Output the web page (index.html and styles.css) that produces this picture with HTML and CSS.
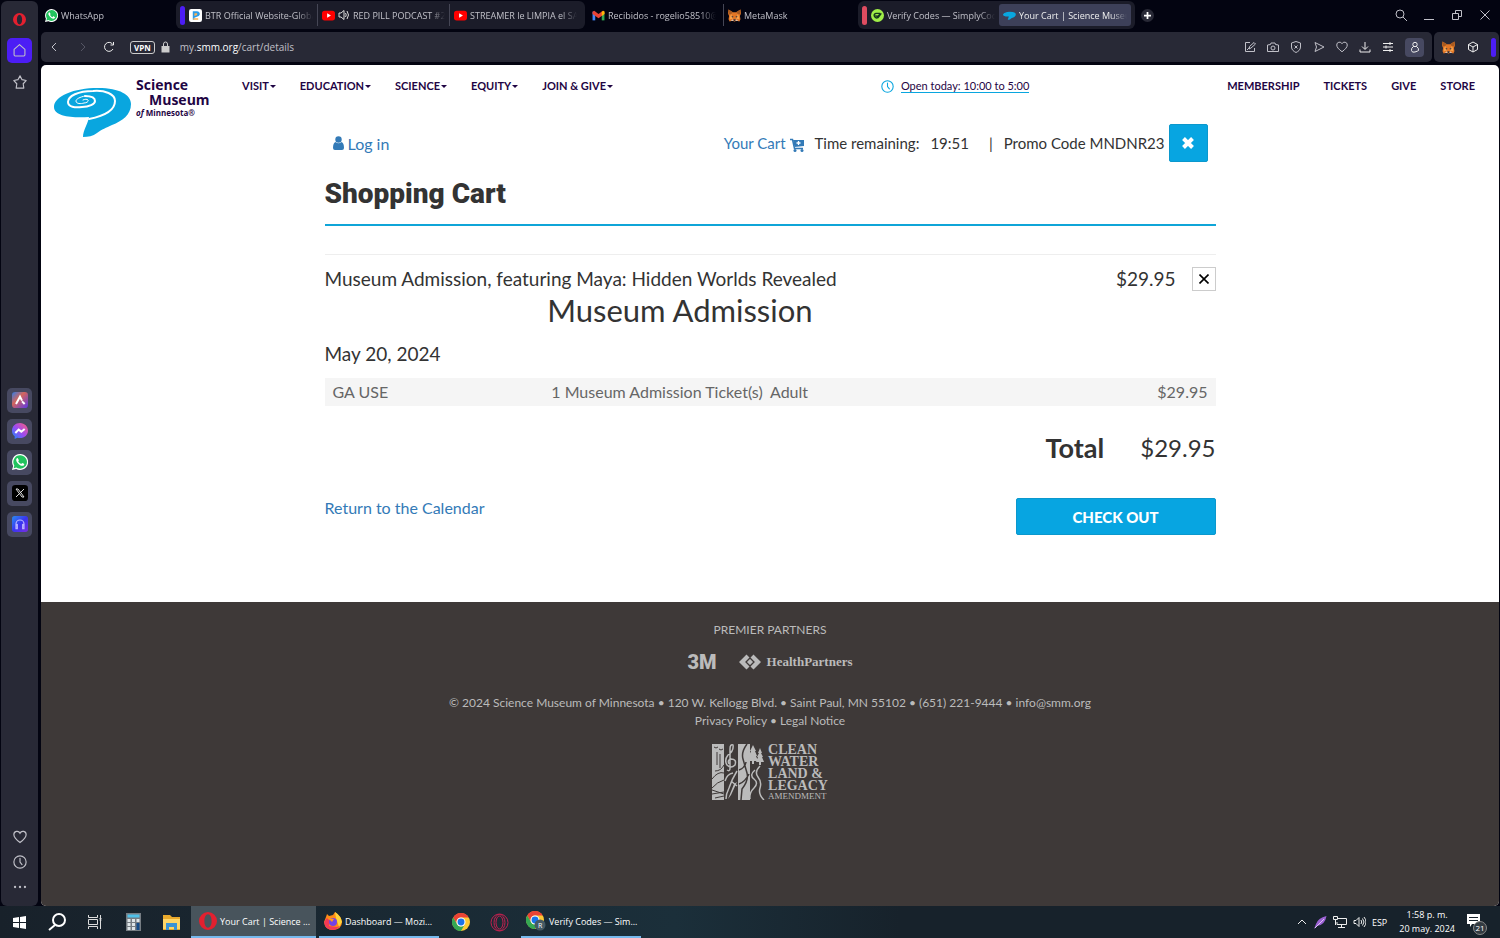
FILE: index.html
```html
<!DOCTYPE html>
<html lang="en">
<head>
    <meta charset="UTF-8">
    <meta name="viewport" content="width=device-width, initial-scale=1.0">
    <title>Your Cart | Science Museum of Minnesota</title>
    <link rel="stylesheet" href="styles.css">
</head>
<body>

<!-- shared icons -->
<svg class="sprite" aria-hidden="true">
    <symbol id="whatsapp" viewBox="0 0 24 24">
        <path fill="#fff" d="M12 0a12 12 0 0 0-10.300 18L0 24l6.200-1.600A12 12 0 1 0 12 0z"/>
        <path fill="#22c35e" d="M12 2a10 10 0 0 0-8.500 15.200l-1 4 4.100-1.100A10 10 0 1 0 12 2z"/>
        <path fill="#fff" d="M8.600 6.500c-.3-.6-.9-.6-1.300-.2C5.500 8 6.200 10.500 8 13c2.200 3 5 4.800 7.500 4.800 1.500 0 3-1.200 2.900-2.600 0-.4-2.700-1.900-3.100-1.700-.5.300-1 1.500-1.500 1.500-1.200 0-4.300-2.800-4.400-4 0-.5 1-1 1-1.600z"/>
    </symbol>
    <symbol id="youtube" viewBox="0 0 24 24">
        <rect x="0" y="3" width="24" height="18" rx="5" fill="#f00"/>
        <path d="M9.500 8v8l7-4z" fill="#fff"/>
    </symbol>
    <symbol id="fox" viewBox="0 0 24 24">
        <path fill="#e27625" d="M1 1l8 5h6l8-5 1 7-2 5 1 6-2 4-6-2-2 2h-2l-2-2-6 2-2-4 1-6-2-5z"/>
        <path fill="#a85a20" d="M1 1l8 5-3 3-5 1zM23 1l-8 5 3 3 5 1z"/>
        <path fill="#f6a24b" d="M6 9l3 9-6 1 1-6zM18 9l-3 9 6 1-1-6z"/>
        <path fill="#233447" d="M6 13l4 1-1 2zM18 13l-4 1 1 2zM10 19h4l-1 3h-2z"/>
        <path fill="#d7c1b3" d="M5 22l4-3 1 3zM19 22l-4-3-1 3z"/>
    </symbol>
    <symbol id="opera" viewBox="0 0 24 24">
        <path fill="#e3202f" fill-rule="evenodd" d="M12 0a12 12 0 1 0 0 24 12 12 0 0 0 0-24zm0 3c3 0 4.800 4 4.800 9s-1.800 9-4.800 9-4.800-4-4.800-9S9 3 12 3z"/>
    </symbol>
    <symbol id="chrome" viewBox="0 0 24 24">
        <circle cx="12" cy="12" r="12" fill="#fcc934"/>
        <path fill="#ea4335" d="M1.600 6A12 12 0 0 1 22.400 6H12a6 6 0 0 0-5.200 9z"/>
        <path fill="#34a853" d="M1.600 6A12 12 0 0 0 12 24l5.200-9A6 6 0 0 1 6.800 15z"/>
        <circle cx="12" cy="12" r="6" fill="#fff"/>
        <circle cx="12" cy="12" r="4.600" fill="#1a73e8"/>
    </symbol>
    <symbol id="heart" viewBox="0 0 24 24">
        <path fill="none" stroke="currentColor" stroke-width="2" d="M12 21.500C5 16 1.500 12.500 1.500 8A5.500 5.500 0 0 1 12 5.500 5.500 5.500 0 0 1 22.500 8c0 4.500-3.500 8-10.500 13.500z"/>
    </symbol>
    <symbol id="clock" viewBox="0 0 24 24">
        <g fill="none" stroke="currentColor" stroke-width="2" stroke-linecap="round"><circle cx="12" cy="12" r="10.500"/><path d="M12 5.500V12l3.500 4.500"/></g>
    </symbol>
    <symbol id="swirl" viewBox="0 0 78 52">
        <path fill="#09a6df" d="M0 21C0 10 20 2 44 2c22 0 33 7 33 16 0 11-9 17-19 21-6 3-10 4-15 8-4 3-9 4-14 4 0-7 5-13 6-20C20 32 0 31 0 21z"/>
    </symbol>
</svg>

<div class="browser">
    <aside class="sidebar">
        <nav class="side-top">
            <a href="#" class="side-link" aria-label="Opera"><svg width="13" height="13"><use href="#opera"/></svg></a>
            <a href="#" class="side-link side-active" aria-label="Home"><svg width="13" height="13" viewBox="0 0 24 24" fill="none" stroke="currentColor" stroke-width="2" stroke-linejoin="round"><path d="M2 10L12 1l10 9v10a2 2 0 0 1-2 2H4a2 2 0 0 1-2-2z"/></svg></a>
            <a href="#" class="side-link" aria-label="Favorites"><svg width="14" height="14" viewBox="0 0 24 24" fill="none" stroke="currentColor" stroke-width="2" stroke-linejoin="round"><path d="M12 1.500l3.500 6.500 7 1.500-5 5.500 1 7.500H5.500l1-7.500-5-5.500 7-1.500z"/></svg></a>
        </nav>
        <nav class="side-apps">
            <a href="#" class="app" aria-label="Aria"><svg width="16" height="16" viewBox="0 0 24 24"><defs><linearGradient id="g1" x2="1" y2="1"><stop stop-color="#2f7ee8"/><stop offset=".4" stop-color="#d4665c"/><stop offset="1" stop-color="#5a36e8"/></linearGradient></defs><rect width="24" height="24" rx="5" fill="url(#g1)"/><path d="M6 18l6-11 3 6M15 14l4 4" fill="none" stroke="#fff" stroke-width="3"/></svg></a>
            <a href="#" class="app" aria-label="Messenger"><svg width="16" height="16" viewBox="0 0 24 24"><defs><linearGradient id="g2" x1="0" y1="1" x2="1" y2="0"><stop stop-color="#1689ff"/><stop offset=".5" stop-color="#a04af0"/><stop offset="1" stop-color="#ff6078"/></linearGradient></defs><path fill="url(#g2)" d="M12 0C5 0 0 5 0 11.500c0 4 1.500 6.500 4 8.500v4l4-2c1 .4 2.500.600 4 .600 7 0 12-5 12-11S19 0 12 0z"/><path d="M5 15l5-5 4 3 5-4" fill="none" stroke="#fff" stroke-width="3"/></svg></a>
            <a href="#" class="app" aria-label="WhatsApp"><svg width="16" height="16"><use href="#whatsapp"/></svg></a>
            <a href="#" class="app" aria-label="X"><svg width="16" height="16" viewBox="0 0 24 24"><rect width="24" height="24" rx="5" fill="#000"/><path d="M6 6h3l9 12h-3zM18 6L6 18" fill="none" stroke="#ddd" stroke-width="1.500"/></svg></a>
            <a href="#" class="app" aria-label="Player"><svg width="16" height="16" viewBox="0 0 24 24"><defs><linearGradient id="g3" x2="1" y2="1"><stop stop-color="#2a8cf0"/><stop offset=".5" stop-color="#3a35f0"/><stop offset="1" stop-color="#7a2ee0"/></linearGradient></defs><rect width="24" height="24" rx="4" fill="url(#g3)"/><path d="M6 16v-4a6 6 0 0 1 12 0v4M8 13v6H6v-5zM16 13v6h2v-5z" fill="none" stroke="#b9b4ff" stroke-width="1.800"/></svg></a>
        </nav>
        <nav class="side-bottom">
            <a href="#" aria-label="Likes"><svg width="14" height="14"><use href="#heart"/></svg></a>
            <a href="#" aria-label="History"><svg width="14" height="14"><use href="#clock"/></svg></a>
            <a href="#" aria-label="More"><svg width="14" height="14" viewBox="0 0 24 24" fill="currentColor"><circle cx="3.500" cy="12" r="2"/><circle cx="12" cy="12" r="2"/><circle cx="20.500" cy="12" r="2"/></svg></a>
        </nav>
    </aside>

    <div class="window">
        <div class="tabstrip">
            <a href="#" class="tab"><svg width="13" height="13"><use href="#whatsapp"/></svg><span>WhatsApp</span></a>
            <div class="tab-group">
                <i class="pill"></i>
                <a href="#" class="tab"><svg width="13" height="13" viewBox="0 0 24 24"><rect width="24" height="24" rx="4" fill="#fff"/><path fill="#2d9be8" d="M7 4h8a5 5 0 0 1 3 9l-8 3v4H7z"/><path fill="#ffb050" d="M10 8h5v3l-5 2zM8 17h9v3H8z"/></svg><span>BTR Official Website-Global</span></a>
                <a href="#" class="tab divided"><svg width="13" height="13"><use href="#youtube"/></svg><svg width="12" height="12" viewBox="0 0 24 24" fill="none" stroke="#ddd" stroke-width="2"><path d="M2 8h4l6-5v18l-6-5H2zM15 8q3 4 0 8M18 4q6 8 0 16"/></svg><span>RED PILL PODCAST #265</span></a>
                <a href="#" class="tab divided"><svg width="13" height="13"><use href="#youtube"/></svg><span>STREAMER le LIMPIA el SALDO</span></a>
            </div>
            <a href="#" class="tab"><svg width="13" height="13" viewBox="0 0 24 24"><path fill="#4285f4" d="M1 5h5v16H1z"/><path fill="#34a853" d="M18 8h5v13h-5z"/><path fill="#ea4335" d="M1 5l3-2 8 6 8-6 3 2v4l-11 8L1 9z"/><path fill="#fbbc04" d="M18 5l4-2 1 2v4l-5 4z"/></svg><span>Recibidos - rogelio58510@gmail</span></a>
            <a href="#" class="tab divided"><svg width="13" height="13"><use href="#fox"/></svg><span>MetaMask</span></a>
            <div class="tab-group">
                <i class="pill pill-red"></i>
                <a href="#" class="tab"><svg width="13" height="13" viewBox="0 0 24 24"><circle cx="12" cy="12" r="12" fill="#a0ee48"/><path fill="none" stroke="#15351c" stroke-width="2.500" d="M17 8H9q-4 1-3 5 2 5 7 3l6-8M8 12l4 2 5-5"/></svg><span>Verify Codes — SimplyCodes</span></a>
                <a href="#" class="tab tab-active"><svg width="13" height="13" viewBox="0 0 78 78"><g transform="translate(0 14)"><use href="#swirl" width="78" height="52"/></g></svg><span>Your Cart | Science Museum</span></a>
            </div>
            <button class="new-tab" aria-label="New tab"><svg width="7" height="7" viewBox="0 0 8 8" stroke="#fff" stroke-width="2"><path d="M4 0v8M0 4h8"/></svg></button>
            <div class="window-buttons">
                <button aria-label="Search tabs"><svg width="12" height="12" viewBox="0 0 12 12"><circle cx="5" cy="5" r="4"/><path d="M8 8l4 4"/></svg></button>
                <button aria-label="Minimize"><svg width="12" height="12" viewBox="0 0 12 12"><path d="M1 10.500h10"/></svg></button>
                <button aria-label="Restore"><svg width="12" height="12" viewBox="0 0 12 12"><path d="M1.500 4.500h6v6h-6zM4.500 4V1.500h6v6H8"/></svg></button>
                <button aria-label="Close"><svg width="12" height="12" viewBox="0 0 12 12"><path d="M1.500 1.500l9 9M10.500 1.500l-9 9"/></svg></button>
            </div>
        </div>

        <div class="toolbar">
            <div class="address">
                <button aria-label="Back"><svg width="12" height="12" viewBox="0 0 12 12"><path d="M7 2L3 6l4 4"/></svg></button>
                <button aria-label="Forward" class="dim"><svg width="12" height="12" viewBox="0 0 12 12"><path d="M5 2l4 4-4 4"/></svg></button>
                <button aria-label="Reload"><svg width="12" height="12" viewBox="0 0 12 12" class="bright"><path d="M10 8A4.500 4.500 0 1 1 9.500 3M10.500 1v3h-3"/></svg></button>
                <span class="vpn">VPN</span>
                <svg class="lock" width="9" height="12" viewBox="0 0 9 12"><path fill="#ccc" d="M0.500 5h8v6.500h-8z"/><path d="M2.500 5V3a2 2 0 0 1 4 0v2" fill="none" stroke="#ccc"/></svg>
                <span class="url">my.<b>smm.org</b>/cart/details</span>
                <div class="tools">
                    <button aria-label="Edit"><svg width="12" height="12" viewBox="0 0 12 12"><path d="M6 1.500H1.500v9h9V7M5 8l.5-2.500 4.500-4 1.500 1.500-4.500 4zM3 9l3-3"/></svg></button>
                    <button aria-label="Snapshot"><svg width="12" height="12" viewBox="0 0 12 12"><path d="M.5 4l3-.5L4 2h4l.5 1.500 3 .5v6.500H.5z"/><circle cx="6" cy="7" r="2"/></svg></button>
                    <button aria-label="Shield"><svg width="12" height="12" viewBox="0 0 12 12"><path d="M6 .5l4.500 1.500v4C10.500 9 8 10.500 6 11.500 4 10.500 1.500 9 1.500 6V2zM4.500 4.500l3 3M7.500 4.500l-3 3"/></svg></button>
                    <button aria-label="Flow"><svg width="12" height="12" viewBox="0 0 12 12"><path d="M2 1.500L11 6l-9 4.500L3.500 6z"/></svg></button>
                    <button aria-label="Like"><svg width="12" height="12"><use href="#heart"/></svg></button>
                    <button aria-label="Downloads"><svg width="12" height="12" viewBox="0 0 12 12" class="bright"><path d="M6 1v7M3 5.500l3 3 3-3M1 8.500v2.500h10V8.500"/></svg></button>
                    <button aria-label="Setup"><svg width="12" height="12" viewBox="0 0 12 12" class="bright"><path d="M1 2.500h10M1 6h10M1 9.500h10M8 1v3M4 4.500v3M8 8v3"/></svg></button>
                    <button aria-label="Profile" class="profile"><svg width="12" height="12" viewBox="0 0 12 12" class="bright"><circle cx="6" cy="3.500" r="2.200"/><path d="M4.500 5.500Q2 7 2.500 9.500T6 11t3.500-1.500Q10 7 7.500 5.500z"/></svg></button>
                </div>
            </div>
            <div class="extensions">
                <button aria-label="MetaMask"><svg class="fox" width="13" height="13"><use href="#fox"/></svg></button>
                <button aria-label="Extensions"><svg width="12" height="12" viewBox="0 0 12 12" class="bright"><path d="M6 1l4.500 2.500v5L6 11 1.500 8.500v-5zM1.500 3.500L6 6l4.500-2.500M6 6v5"/></svg></button>
                <i class="pill"></i>
            </div>
        </div>

        <div class="page">
            <header class="site-header">
                <a href="#" class="logo">
                    <svg width="78" height="52" viewBox="0 0 78 52">
                        <use href="#swirl" width="78" height="52"/>
                        <g fill="none" stroke="#fff" stroke-linecap="round">
                            <path stroke-width="2" d="M35 33C50 30 61 24 61 15 61 8 51 4 39 5 24 5 14 10 14 16c0 5 7 6 14 5 7 0 13-3 13-6 0-4-5-5-10-5"/>
                            <path d="M31 10c-5 1-9 3-9 5 0 3 5 3 8 2 3 0 5-2 4-3-1-1-3-1-5 0"/>
                        </g>
                    </svg>
                    <span class="logo-text"><b>Science</b><b class="indent">Museum</b><small><i>of</i> Minnesota®</small></span>
                </a>
                <nav class="main-nav">
                    <a href="#">VISIT<i class="caret"></i></a>
                    <a href="#">EDUCATION<i class="caret"></i></a>
                    <a href="#">SCIENCE<i class="caret"></i></a>
                    <a href="#">EQUITY<i class="caret"></i></a>
                    <a href="#">JOIN &amp; GIVE<i class="caret"></i></a>
                </nav>
                <div class="hours"><svg width="13" height="13"><use href="#clock"/></svg><a href="#">Open today: 10:00 to 5:00</a></div>
                <nav class="main-nav">
                    <a href="#">MEMBERSHIP</a>
                    <a href="#">TICKETS</a>
                    <a href="#">GIVE</a>
                    <a href="#">STORE</a>
                </nav>
            </header>

            <main class="container">
                <div class="cart-bar">
                    <a href="#" class="login"><svg width="11" height="14" viewBox="0 0 11 14" fill="currentColor"><circle cx="5.500" cy="3.500" r="3.200"/><path d="M2.500 6q3 2.500 6 0Q11 7 11 12q0 2-2 2H2q-2 0-2-2 0-5 2.500-6z"/></svg>Log in</a>
                    <div class="cart-status">
                        <a href="#">Your Cart <svg width="14" height="14" viewBox="0 0 14 14"><path fill="currentColor" d="M3 2h11v6L4.500 9z"/><path d="M0 1.500h2.500l2 9H13" fill="none" stroke="currentColor" stroke-width="1.500"/><path d="M8.500 3v4M6.500 5h4" stroke="#fff" stroke-width="1.300"/><circle cx="5" cy="12.500" r="1.500" fill="currentColor"/><circle cx="12" cy="12.500" r="1.500" fill="currentColor"/></svg></a>
                        <span>Time remaining:</span>
                        <span class="timer">19:51</span>
                        <span class="bar">|</span>
                        <span class="promo">Promo Code MNDNR23</span>
                        <button class="btn remove-promo" aria-label="Remove promo code"><svg width="12" height="12" viewBox="0 0 12 12" stroke="#fff" stroke-width="4"><path d="M1.500 1.500l9 9M10.500 1.500l-9 9"/></svg></button>
                    </div>
                </div>

                <h1>Shopping Cart</h1>

                <section class="item">
                    <div class="item-head">
                        <span>Museum Admission, featuring Maya: Hidden Worlds Revealed</span>
                        <span class="price">$29.95</span>
                        <button class="remove" aria-label="Remove item"><svg width="10" height="10" viewBox="0 0 10 10" stroke="#000" stroke-width="1.600"><path d="M.5.500l9 9M9.500.500l-9 9"/></svg></button>
                    </div>
                    <h2>Museum Admission</h2>
                    <p class="date">May 20, 2024</p>
                    <table class="tickets">
                        <tr><td>GA USE</td><td>1 Museum Admission Ticket(s)</td><td>Adult</td><td class="amount">$29.95</td></tr>
                    </table>
                </section>

                <div class="total"><b>Total</b><span>$29.95</span></div>

                <div class="actions">
                    <a href="#">Return to the Calendar</a>
                    <button class="btn checkout">CHECK OUT</button>
                </div>
            </main>

            <footer class="site-footer">
                <p>PREMIER PARTNERS</p>
                <div class="partners">
                    <span class="mmm">3M</span>
                    <span class="health"><svg width="22" height="16" viewBox="0 0 22 16"><path fill="#bbb" d="M0 8l7.500-7.500L11 4l3.500-3.500L22 8l-7.500 7.500L11 12l-3.500 3.500z"/><path fill="none" stroke="#3e3938" stroke-width="1.300" d="M7 8l4-4 4 4-4 4z"/></svg>HealthPartners</span>
                </div>
                <p>© 2024 Science Museum of Minnesota • 120 W. Kellogg Blvd. • Saint Paul, MN 55102 • (651) 221-9444 • <a href="#">info@smm.org</a><br><a href="#">Privacy Policy</a> • <a href="#">Legal Notice</a></p>
                <div class="legacy">
                    <svg width="53" height="56" viewBox="0 0 53 56">
                        <path fill="#bbb" d="M0 0h12v56H0zM26 0h12v56H26z"/>
                        <g fill="none" stroke="#3e3938">
                            <path d="M2 3l2 1 2-1M7 5l2 1 2-1M5 8v13M8 10v14M3 27q6 0 9-6M0 35q6-8 12-6M0 44q5-6 12-8M0 46l12 4M0 50l12-2M3 54l9-2"/>
                            <path stroke-width="1.500" d="M35 0q-6 8-4 15t4 14-5 16l-1 11M27 26q6-2 7-8M27 40q6-2 10-10"/>
                        </g>
                        <g fill="none" stroke="#bbb" stroke-width="1.500">
                            <path d="M18 24V5q0-5 3-4 1 6-5 10-4 5-1 10 4 4 8 0 2-6-4-6-4 1-2 5M18 24q0 4-3 2M25 27q-5 8-8 17-3 6-3 11M21 29q-6 1-8 8M19 37l6 5M43 26q-6 5-1 9t0 9-4 11M48 22q-6 6-2 11t2 11 4 12"/>
                        </g>
                        <path fill="#bbb" d="M41 1l3 6h-1l2 5h-1l2 5h-4v3h-2v-3h-4l2-5h-1l2-5h-1zM48 4l2 5h-1l2 4h-1l2 5h-3v3h-2v-3h-3l2-5h-1l2-4h-1zM22 40l3-2-6 13-3 4z"/>
                    </svg>
                    <div class="legacy-text"><b>CLEAN</b><b>WATER</b><b>LAND &amp;</b><b>LEGACY</b><small>AMENDMENT</small></div>
                </div>
            </footer>
        </div>
    </div>
</div>

<div class="taskbar">
    <button aria-label="Start"><svg width="13" height="13" viewBox="0 0 13 13" fill="#fff"><path d="M0 2l6-1v5H0zM7 1l6-1v6H7zM0 7h6v5l-6-1zM7 7h6v6l-6-1z"/></svg></button>
    <button aria-label="Search"><svg width="18" height="18" viewBox="0 0 18 18" fill="none" stroke="#fff" stroke-width="2"><circle cx="11" cy="7" r="6"/><path d="M7 12l-6 5"/></svg></button>
    <button aria-label="Task view"><svg width="14" height="14" viewBox="0 0 14 14" fill="none" stroke="#ddd"><path d="M.5 0v2.500h9V0M.5 4.500h9v5h-9zM.5 14v-2.500h9V14M12.500 0v14M11.500 3.500h2M11.500 5h2"/></svg></button>
    <button aria-label="Calculator"><svg width="15" height="18" viewBox="0 0 15 18"><path fill="#767d83" d="M0 0h15v18H0z"/><path fill="#4fc1e9" d="M1.500 1.500h12v3h-12z"/><path fill="#dfe5e8" d="M1.500 6h3v3h-3zM6 6h3v3H6zM10.500 6h3v3h-3zM1.500 10h3v3h-3zM6 10h3v3H6zM1.500 14h3v3h-3zM6 14h3v3H6z"/><path fill="#164b86" d="M10.500 10h3v7h-3z"/></svg></button>
    <button aria-label="File Explorer"><svg width="17" height="15" viewBox="0 0 17 15"><path fill="#e8a92c" d="M0 0h7l2 2h8v13H0z"/><path fill="#ffd667" d="M0 4h17v10H0z"/><path fill="#3b93d6" d="M3 15V8h11v7h-3v-3H6v3z"/></svg></button>
    <button class="task task-active"><svg width="18" height="18"><use href="#opera"/></svg><span>Your Cart | Science ...</span></button>
    <button class="task"><svg width="18" height="18" viewBox="0 0 18 18"><path fill="#ff8b16" d="M2 5l1-3 2 2 4-1 2-3q6 4 7 10 0 7-9 8-8 0-9-8z"/><path fill="#ffd43b" d="M11 0q6 4 7 10l-3 5-3-9z"/><path fill="#f33a55" d="M0 10l3-4 3 3-1 5 8 1 3-1q-3 4-7 4-8 0-9-8z"/><circle cx="9" cy="10" r="4" fill="#7542e5"/><path fill="#ff9a1f" d="M4 6l6 1-2 3z"/></svg><span>Dashboard — Mozi...</span></button>
    <button aria-label="Chrome"><svg width="18" height="18"><use href="#chrome"/></svg></button>
    <button aria-label="Opera GX"><svg width="19" height="19" viewBox="0 0 19 19" fill="none" stroke="#c5204f"><circle cx="9.500" cy="9.500" r="8.500"/><ellipse cx="9.500" cy="9.500" rx="3.500" ry="6.500"/><ellipse cx="9.500" cy="9.500" rx="5.500" ry="8"/></svg></button>
    <button class="task"><svg width="20" height="20" viewBox="0 0 20 20"><use href="#chrome" width="18" height="18"/><circle cx="14" cy="14" r="5.500" fill="#455a64"/><text x="12" y="17" font-size="7" fill="#fff">R</text></svg><span>Verify Codes — Sim...</span></button>
    <div class="tray">
        <svg width="12" height="12" viewBox="0 0 12 12" fill="none" stroke="#eee"><path d="M2 8l4-4 4 4"/></svg>
        <svg width="13" height="13" viewBox="0 0 13 13"><path fill="#9c62d4" d="M12.500 0Q4 2 2 8l-2 5 3-3q8-1 9.500-10z"/><path d="M1 12l9-9" stroke="#dcc2f4"/></svg>
        <svg width="14" height="12" viewBox="0 0 14 12" fill="none" stroke="#eee"><path d="M5 2.500h8.500v6H4V6M8.500 9v2M5 11.500h7M.5.500h4v3h-4zM2.500 4v5"/></svg>
        <svg width="13" height="12" viewBox="0 0 13 12" fill="none" stroke="#eee"><path d="M1 4.500h2l3-3v9l-3-3H1zM8 4q1.500 2 0 4M9.500 2.500q3 3.500 0 7M11 1q4 5 0 10"/></svg>
        <span>ESP</span>
        <span class="datetime">1:58 p. m.<br>20 may. 2024</span>
        <span class="notify"><svg width="14" height="14" viewBox="0 0 14 14"><path fill="#fff" d="M0 0h13v10H5l-2 3v-3H0z"/><path stroke="#17222b" d="M2 3.500h9M2 6.500h9"/></svg><span class="badge">21</span></span>
    </div>
</div>

</body>
</html>
```
FILE: styles.css
```css
* {
    box-sizing: border-box;
}

body {
    margin: 0;
    min-height: 100vh;
    display: flex;
    flex-direction: column;
    background-color: #030411;
    font-family: "Open Sans", "Noto Sans", sans-serif;
    font-size: 9px;
}

a {
    color: inherit;
    text-decoration: none;
}

button {
    border: 0;
    padding: 0;
    background: none;
    color: inherit;
    font: inherit;
    display: flex;
    align-items: center;
    justify-content: center;
}

svg {
    flex: none;
}

.sprite {
    position: absolute;
    width: 0;
    height: 0;
}

.browser {
    flex: 1;
    display: flex;
    gap: 3px;
    padding: 1px 1px 0;
    color: #c0c0c8;
}

/* opera sidebar */
.sidebar {
    width: 37px;
    display: flex;
    flex-direction: column;
    justify-content: space-between;
    align-items: center;
    padding: 6px 0 12px;
    background-color: #282936;
    border-radius: 6px;
}

.side-top,
.side-apps,
.side-bottom {
    display: flex;
    flex-direction: column;
    align-items: center;
    gap: 6px;
}

.side-bottom {
    gap: 11px;
}

.side-bottom a {
    display: flex;
}

.side-link,
.app {
    width: 25px;
    height: 25px;
    display: flex;
    align-items: center;
    justify-content: center;
    border-radius: 5px;
}

.side-active {
    background-color: #4c1df5;
}

.app {
    background-color: #474961;
}

.window {
    flex: 1;
    min-width: 0;
    display: flex;
    flex-direction: column;
}

/* tabs */
.tabstrip {
    height: 31px;
    display: flex;
    align-items: center;
    gap: 3px;
    padding-bottom: 3px;
}

.tab {
    flex: 0 1 132px;
    min-width: 0;
    height: 22px;
    display: flex;
    align-items: center;
    gap: 3px;
    padding: 0 4px;
    border-radius: 3px;
}

.tab span {
    flex: 1;
    overflow: hidden;
    white-space: nowrap;
    mask-image: linear-gradient(to right, #000 85%, transparent);
}

.divided {
    border-left: 1px solid #454655;
    border-radius: 0;
}

.tab-group {
    height: 28px;
    display: flex;
    align-items: center;
    padding: 0 4px;
    background-color: #1b1c29;
    border-radius: 6px;
}

.tab-active {
    background-color: #3d4059;
    color: #eee;
}

.pill {
    flex: none;
    width: 5px;
    height: 19px;
    border-radius: 3px;
    background-color: #4c1df5;
}

.pill-red {
    background-color: #df4c60;
}

.new-tab {
    width: 13px;
    height: 13px;
    margin-left: 3px;
    border-radius: 50%;
    background-color: #282936;
}

.window-buttons {
    margin-left: auto;
    display: flex;
    gap: 16px;
    padding-right: 8px;
}

.window-buttons svg,
.toolbar button svg {
    fill: none;
    stroke: currentColor;
}

.toolbar .fox {
    stroke: none;
}

.bright {
    color: #eee;
}

/* address bar */
.toolbar {
    display: flex;
    gap: 2px;
    margin-bottom: 3px;
}

.address,
.extensions {
    height: 30px;
    display: flex;
    align-items: center;
    background-color: #282936;
    border-radius: 5px;
}

.address {
    flex: 1;
    gap: 15px;
    padding: 0 8px;
}

.dim {
    color: #555664;
}

.vpn {
    padding: 0 3px;
    border: 1px solid #ccc;
    border-radius: 3px;
    color: #fff;
    font-size: 8px;
    font-weight: bold;
    line-height: 11px;
}

.lock {
    margin-left: -9px;
}

.url {
    margin-left: -5px;
    font-size: 10px;
}

.url b {
    color: #fff;
    font-weight: normal;
}

.tools {
    margin-left: auto;
    display: flex;
    align-items: center;
    gap: 11px;
}

.profile {
    width: 19px;
    height: 19px;
    border-radius: 4px;
    background-color: #474961;
}

.extensions {
    gap: 12px;
    padding: 0 3px 0 8px;
}

/* museum site */
.page {
    flex: 1;
    display: flex;
    flex-direction: column;
    overflow: hidden;
    background-color: #fff;
    border-radius: 5px;
    color: #333;
    font-family: Lato, "Open Sans", sans-serif;
    font-size: 16px;
}

.site-header {
    display: grid;
    grid-template-columns: 188px auto 1fr auto;
    align-items: start;
    padding: 12px 24px 0 13px;
    color: #1f0544;
    line-height: 18px;
}

.logo {
    height: 47px;
    display: flex;
    gap: 4px;
}

.logo svg {
    margin-top: 9px;
}

.logo-text {
    display: flex;
    flex-direction: column;
    font-family: "Open Sans", sans-serif;
    font-size: 14px;
    line-height: 15px;
}

.logo-text .indent {
    padding-left: 13px;
}

.logo-text small {
    font-size: 8px;
    font-weight: bold;
    line-height: 12px;
}

.main-nav {
    display: flex;
    gap: 24px;
    font-size: 11px;
    font-weight: bold;
}

.main-nav a {
    display: flex;
    align-items: center;
}

.caret {
    margin-left: 1px;
    border: 3px solid transparent;
    border-top-color: currentColor;
    border-bottom: 0;
}

.hours {
    display: flex;
    align-items: center;
    justify-content: center;
    gap: 7px;
    padding: 2px 0 0 70px;
    font-size: 11px;
}

.hours svg {
    color: #09a6df;
}

.hours a {
    line-height: 13px;
    border-bottom: 1px solid #09a6df;
}

.container {
    width: 100%;
    max-width: 891px;
    margin: 0 auto;
    padding-bottom: 67px;
}

.cart-bar {
    display: flex;
    align-items: center;
    justify-content: space-between;
    padding: 0 8px;
}

.container a {
    color: #337ab7;
}

.login {
    display: flex;
    align-items: center;
    gap: 4px;
}

.cart-status {
    display: flex;
    align-items: center;
    gap: 11px;
    font-size: 15px;
}

.cart-status svg {
    vertical-align: middle;
}

.bar {
    margin-left: 9px;
}

.promo {
    margin-right: -7px;
}

.btn {
    background-color: #07a5e1;
    border: 1px solid #0b98cd;
    border-radius: 2px;
    color: #fff;
    font-weight: 900;
}

.remove-promo {
    width: 39px;
    height: 38px;
}

h1 {
    margin: 14px 0 28px;
    padding-bottom: 12px;
    border-bottom: 2px solid #0fa5d8;
    font-family: Roboto, Lato, sans-serif;
    font-size: 28px;
    font-weight: 900;
    line-height: 36px;
}

.item {
    padding-top: 12px;
    border-top: 1px solid #eee;
}

.item-head {
    display: flex;
    align-items: center;
    font-size: 19px;
    line-height: 24px;
}

.price {
    margin: 0 16px 0 auto;
}

.remove {
    width: 24px;
    height: 24px;
    border: 1px solid #ccc;
}

h2 {
    margin: 0 0 13px 25%;
    font-size: 31px;
    font-weight: normal;
    line-height: 38px;
}

.date {
    margin: 0 0 12px;
    font-size: 19px;
    line-height: 24px;
}

.tickets {
    width: 100%;
    table-layout: fixed;
    border-spacing: 0;
    padding: 0 8px;
    background-color: #f5f5f5;
    color: #666;
    line-height: 28px;
}

.tickets td {
    padding: 0;
    white-space: nowrap;
}

.amount {
    text-align: right;
}

.total {
    display: flex;
    align-items: center;
    justify-content: flex-end;
    gap: 36px;
    margin: 24px 0 32px;
    font-size: 24px;
    line-height: 36px;
}

.total b {
    font-size: 27px;
}

.actions {
    display: flex;
    justify-content: space-between;
    line-height: 20px;
}

.checkout {
    width: 200px;
    height: 37px;
    font-size: 15px;
}

.site-footer {
    flex: 1;
    display: flex;
    flex-direction: column;
    align-items: center;
    padding: 19px 0;
    background-color: #3e3938;
    color: #bbb;
    font-size: 12px;
    line-height: 18px;
    text-align: center;
}

.site-footer p {
    margin: 0;
}

.partners {
    display: flex;
    align-items: center;
    gap: 22px;
    margin: 10px 0 19px;
    line-height: 26px;
}

.mmm {
    font-family: Roboto, sans-serif;
    font-size: 20px;
    font-weight: 900;
}

.health {
    display: flex;
    align-items: center;
    gap: 6px;
    font-family: "Liberation Serif", serif;
    font-size: 13px;
    font-weight: bold;
}

.legacy {
    display: flex;
    gap: 3px;
    margin-top: 14px;
}

.legacy-text {
    display: flex;
    flex-direction: column;
    font-family: "Liberation Serif", serif;
    font-size: 14px;
    line-height: 12px;
    text-align: left;
}

.legacy-text small {
    font-size: 9px;
    line-height: 9px;
}

/* windows taskbar */
.taskbar {
    height: 32px;
    display: flex;
    background: linear-gradient(to right, #18212a, #1b2f3a 45%, #17222b 60%);
    color: #fff;
}

.taskbar button {
    width: 38px;
}

.taskbar .task {
    width: 120px;
    margin: 0 3px;
    justify-content: flex-start;
    gap: 3px;
    padding: 0 5px;
    border-bottom: 2px solid #76b9ed;
    white-space: nowrap;
}

.taskbar .task-active {
    width: 125px;
    margin: 0 0 0 1px;
    padding-left: 8px;
    background-color: #48545c;
}

.tray {
    margin-left: auto;
    display: flex;
    align-items: center;
    gap: 6px;
    padding-right: 13px;
}

.datetime {
    margin: 0 6px;
    line-height: 14px;
    text-align: center;
}

.notify {
    position: relative;
    width: 20px;
    height: 16px;
}

.badge {
    position: absolute;
    right: 0;
    bottom: -5px;
    width: 14px;
    height: 14px;
    border: 1px solid #888;
    border-radius: 50%;
    background-color: #333b42;
    font-size: 8px;
    line-height: 12px;
    text-align: center;
}
```
